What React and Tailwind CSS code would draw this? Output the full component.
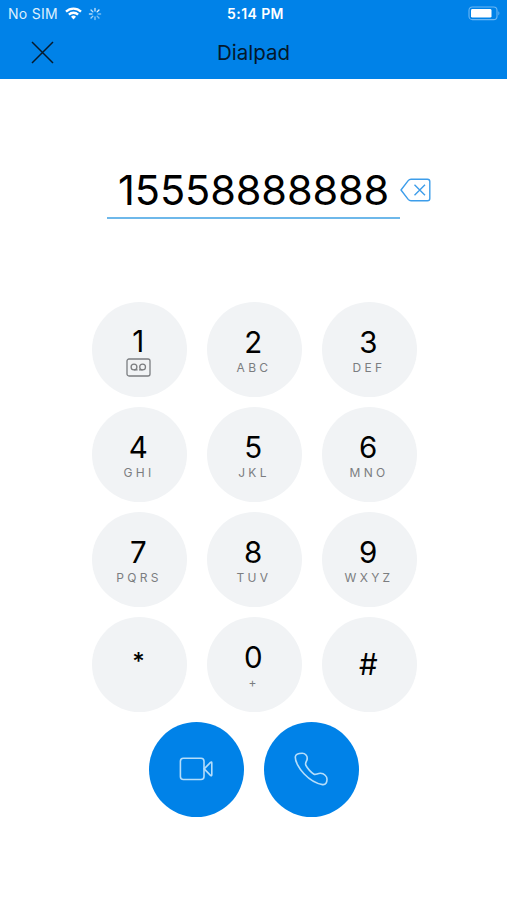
import { useState } from "react";

const KEYS = [
  { digit: "1", voicemail: true },
  { digit: "2", letters: "ABC" },
  { digit: "3", letters: "DEF" },
  { digit: "4", letters: "GHI" },
  { digit: "5", letters: "JKL" },
  { digit: "6", letters: "MNO" },
  { digit: "7", letters: "PQRS" },
  { digit: "8", letters: "TUV" },
  { digit: "9", letters: "WXYZ" },
  { digit: "*" },
  { digit: "0", letters: "+" },
  { digit: "#" },
];

const SPOKES = [
  { angle: 0, opacity: 0.75 },
  { angle: 45, opacity: 0.9 },
  { angle: 90, opacity: 0.45 },
  { angle: 135, opacity: 0.5 },
  { angle: 180, opacity: 0.55 },
  { angle: 225, opacity: 0.65 },
  { angle: 270, opacity: 0.7 },
  { angle: 315, opacity: 0.75 },
];

function WifiIcon() {
  return (
    <svg width="17" height="13" viewBox="0 0 17 13" fill="none" stroke="#fff" strokeWidth="2.3">
      <path d="M1 4.6a10.8 10.8 0 0 1 15 0" />
      <path d="M3.9 7.6a6.6 6.6 0 0 1 9.2 0" />
      <path d="M8.5 12.4 6 9.8a3.6 3.6 0 0 1 5 0z" fill="#fff" stroke="none" />
    </svg>
  );
}

function SpinnerIcon() {
  return (
    <svg width="14" height="14" viewBox="-7 -7 14 14" stroke="#fff" strokeWidth="1.4" strokeLinecap="round">
      {SPOKES.map(s => (
        <path key={s.angle} d="M0 -3V-5.6" opacity={s.opacity} transform={`rotate(${s.angle})`} />
      ))}
    </svg>
  );
}

function BatteryIcon() {
  return (
    <svg width="33" height="15" viewBox="0 0 33 15" fill="none">
      <rect x="1" y="1" width="28" height="12.6" rx="3.4" stroke="#6cb7f3" strokeWidth="1.1" />
      <rect x="3" y="3" width="20.5" height="8.6" rx="1.4" fill="#fff" />
      <path d="M30.4 5.2c1.3.6 1.3 3.6 0 4.2z" fill="#6cb7f3" />
    </svg>
  );
}

function VoicemailIcon() {
  return (
    <svg width="25" height="19" viewBox="0 0 25 19" fill="none" stroke="#7b7d80" strokeWidth="1.3">
      <rect x="1" y="1" width="23" height="17" rx="2" />
      <circle cx="8" cy="9" r="2.9" />
      <circle cx="16.6" cy="9" r="2.9" />
      <path d="M8 11.9H11.6M16.6 11.9H13" />
    </svg>
  );
}

function Key({ digit, letters, voicemail, onPress }) {
  return (
    <button
      onClick={() => onPress(digit)}
      className="flex size-[95px] flex-col items-center justify-center rounded-full bg-[#f1f3f5]"
    >
      {digit === "*" ? (
        <span className="pr-px pb-[5px] text-[24px] leading-7 font-medium text-black">*</span>
      ) : (
        <span className={`pr-[1.5px] text-[29.5px] leading-8 text-black ${letters || voicemail ? "pt-[3px]" : ""}`}>{digit}</span>
      )}
      {voicemail && <span className="mt-px pr-px"><VoicemailIcon /></span>}
      {letters && <span className="mt-[2px] text-[12px] leading-4 tracking-[3.3px] text-[#7b7d80]">{letters}</span>}
    </button>
  );
}

export default function App() {
  const [number, setNumber] = useState("15558888888");

  return (
    <div className="flex h-[900px] w-[507px] flex-col bg-white font-['Inter',sans-serif]">
      <header className="h-[79px] bg-[#0082e8]">
        <div className="grid h-[27px] grid-cols-3 items-center text-[14px] text-white">
          <div className="flex items-center pl-2">
            <span className="tracking-[0.3px] text-[#dceffd]">No SIM</span>
            <span className="ml-[7px]"><WifiIcon /></span>
            <span className="ml-[6px]"><SpinnerIcon /></span>
          </div>
          <span className="pl-1 text-center text-[14px] font-semibold tracking-[0.4px]">5:14 PM</span>
          <div className="flex justify-end pr-[6px]"><BatteryIcon /></div>
        </div>
        <div className="grid h-[51px] grid-cols-[84px_1fr_84px] items-center">
          <button className="pl-[31px]">
            <svg width="23" height="23" viewBox="0 0 23 23" stroke="#071a2b" strokeWidth="1.5">
              <path d="M1 1l21 21M22 1L1 22" />
            </svg>
          </button>
          <h1 className="pt-px text-center text-[20.5px] text-[#04182b]">Dialpad</h1>
        </div>
      </header>

      <div className="flex h-[140px] items-end pl-[107px]">
        <div className="h-[57px] w-[293px] border-b-2 border-[#6eb8ea] pt-[3px] pl-[11px] text-[41.5px] leading-[50px] tracking-[-0.1px] text-black">
          {number}
        </div>
        <button className="mb-[17px]" onClick={() => setNumber(number.slice(0, -1))}>
          <svg width="31" height="24" viewBox="0 0 31 24" fill="none" stroke="#3d9dea" strokeWidth="1.4" strokeLinejoin="round">
            <path d="M1 12 8.2 2.6Q9.3 1.3 11 1.3H27.5Q29.8 1.3 29.8 3.5V20.5Q29.8 22.7 27.5 22.7H11Q9.3 22.7 8.2 21.4Z" />
            <path d="M14.5 6.7l10.5 10.5M25 6.7L14.5 17.2" />
          </svg>
        </button>
      </div>

      <div className="mt-[82.5px] grid grid-cols-[repeat(3,95px)] justify-center gap-x-5 gap-y-[10px] pl-px">
        {KEYS.map(k => (
          <Key key={k.digit} {...k} onPress={d => setNumber(number + d)} />
        ))}
      </div>

      <div className="mt-[10px] flex justify-center gap-5">
        <button className="flex size-[95px] items-center justify-center rounded-full bg-[#0082e8]">
          <svg width="34" height="24" viewBox="0 0 34 24" fill="none" stroke="#b5ddfa" strokeWidth="1.6" strokeLinejoin="round">
            <rect x="1.4" y="1.2" width="23.6" height="21.3" rx="3" />
            <path d="M25.2 11.9 31.5 5.4Q32.8 4.4 32.8 6V17.8Q32.8 19.4 31.5 18.4Z" />
          </svg>
        </button>
        <button className="flex size-[95px] items-center justify-center rounded-full bg-[#0082e8]">
          <svg width="34" height="34" viewBox="0 0 34 34" fill="none" stroke="#b5ddfa" strokeWidth="1.6" strokeLinejoin="round">
            <path d="M1.4 4.5C1.8 1.8 5 1.2 8.2 1.2C11.3 1.2 13.6 4 13.2 7C12.8 9.5 10.8 10.8 11.8 13.2C13.2 16.3 17.5 20.8 20 22.2C22 23 23.5 21.2 26.5 21.3C30.2 21.5 33 24.3 33 27.2C33 30.5 31.8 33 28.5 32.6C22 31.6 15.5 27.6 10 21.8C5 16.4 0.8 9 1.4 4.5Z" />
          </svg>
        </button>
      </div>
    </div>
  );
}
